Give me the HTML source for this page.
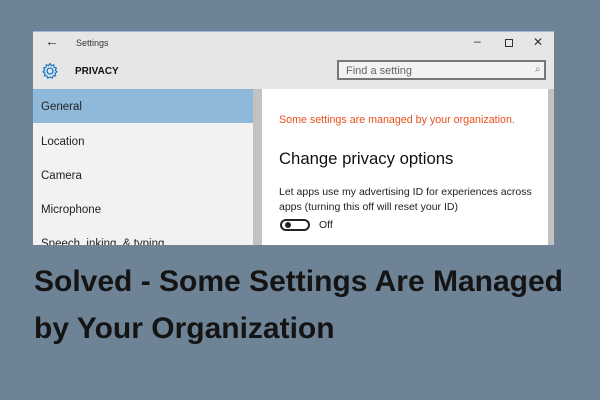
<!DOCTYPE html>
<html><head><style>
body{margin:0;width:600px;height:400px;background:#6f8397;position:relative;overflow:hidden;font-family:"Liberation Sans",sans-serif}
.win{position:absolute;left:33px;top:31px;width:521px;height:213px;background:#e6e6e6;overflow:hidden;border-top:1px solid #9bb8d8}
.t{position:absolute;white-space:nowrap}
</style></head><body>
<div class="win">
 <div class="t" style="left:12px;top:1px;font-size:14px;color:#333">&#8592;</div>
 <div class="t" style="left:43px;top:6px;font-size:9px;color:#333">Settings</div>
 <div class="t" style="top:2px;font-size:12px;color:#333;left:441px">&#8211;</div>
 <div style="position:absolute;left:472px;top:7px;width:6px;height:6px;border:1px solid #333"></div>
 <div class="t" style="left:500px;top:3px;font-size:12px;color:#333">&#10005;</div>
 <svg style="position:absolute;left:8px;top:30px" width="18" height="18" viewBox="0 0 18 18"><circle cx="9" cy="9" r="3" fill="none" stroke="#1a78c2" stroke-width="1.3"/><path d="M9 1.5 L10.3 3.6 L12.8 2.9 L13 5.3 L15.4 6 L14.3 8.3 L16 9.8 L14 11.3 L14.6 13.8 L12.2 13.8 L11.2 16.2 L9 15 L6.8 16.2 L5.8 13.8 L3.4 13.8 L4 11.3 L2 9.8 L3.7 8.3 L2.6 6 L5 5.3 L5.2 2.9 L7.7 3.6 Z" fill="none" stroke="#1a78c2" stroke-width="1.2"/></svg>
 <div class="t" style="left:42px;top:34px;font-size:10px;font-weight:bold;color:#111">PRIVACY</div>
 <div style="position:absolute;left:304px;top:28px;width:209px;height:20px;border:2px solid #777;background:#f2f2f2;box-sizing:border-box"></div>
 <div class="t" style="left:313px;top:33px;font-size:11px;color:#666">Find a setting</div>
 <div class="t" style="left:502px;top:32px;font-size:10px;color:#777">&#8981;</div>
 <div style="position:absolute;left:0;top:57px;width:220px;height:160px;background:#f2f2f2"></div>
 <div style="position:absolute;left:0;top:57px;width:220px;height:34px;background:#8fb9da"></div>
 <div class="t" style="left:8px;top:69px;font-size:11.5px;color:#222">General</div>
 <div class="t" style="left:8px;top:104px;font-size:11.5px;color:#222">Location</div>
 <div class="t" style="left:8px;top:138px;font-size:11.5px;color:#222">Camera</div>
 <div class="t" style="left:8px;top:172px;font-size:11.5px;color:#222">Microphone</div>
 <div class="t" style="left:8px;top:206px;font-size:11.5px;color:#222">Speech, inking, &amp; typing</div>
 <div style="position:absolute;left:220px;top:57px;width:9px;height:160px;background:#c2c2c2"></div>
 <div style="position:absolute;left:229px;top:57px;width:286px;height:160px;background:#fff"></div>
 <div style="position:absolute;left:515px;top:57px;width:6px;height:160px;background:#c2c2c2"></div>
 <div class="t" style="left:246px;top:82px;font-size:10.7px;color:#e8501e">Some settings are managed by your organization.</div>
 <div class="t" style="left:246px;top:117px;font-size:16.7px;color:#111">Change privacy options</div>
 <div class="t" style="left:246px;top:153px;font-size:10.5px;color:#222;line-height:14.5px">Let apps use my advertising ID for experiences across<br>apps (turning this off will reset your ID)</div>
 <div style="position:absolute;left:247px;top:187px;width:30px;height:12px;border:2px solid #222;border-radius:8px;box-sizing:border-box"></div>
 <div style="position:absolute;left:252px;top:190px;width:6px;height:6px;border-radius:50%;background:#222"></div>
 <div class="t" style="left:286px;top:187px;font-size:10.5px;color:#222">Off</div>
</div>
<div class="t" style="left:34px;top:264px;font-size:30px;font-weight:bold;color:#141414;line-height:36px">Solved - Some Settings Are Managed</div>
<div class="t" style="left:34px;top:311px;font-size:30px;font-weight:bold;color:#141414;line-height:36px">by Your Organization</div>
</body></html>
